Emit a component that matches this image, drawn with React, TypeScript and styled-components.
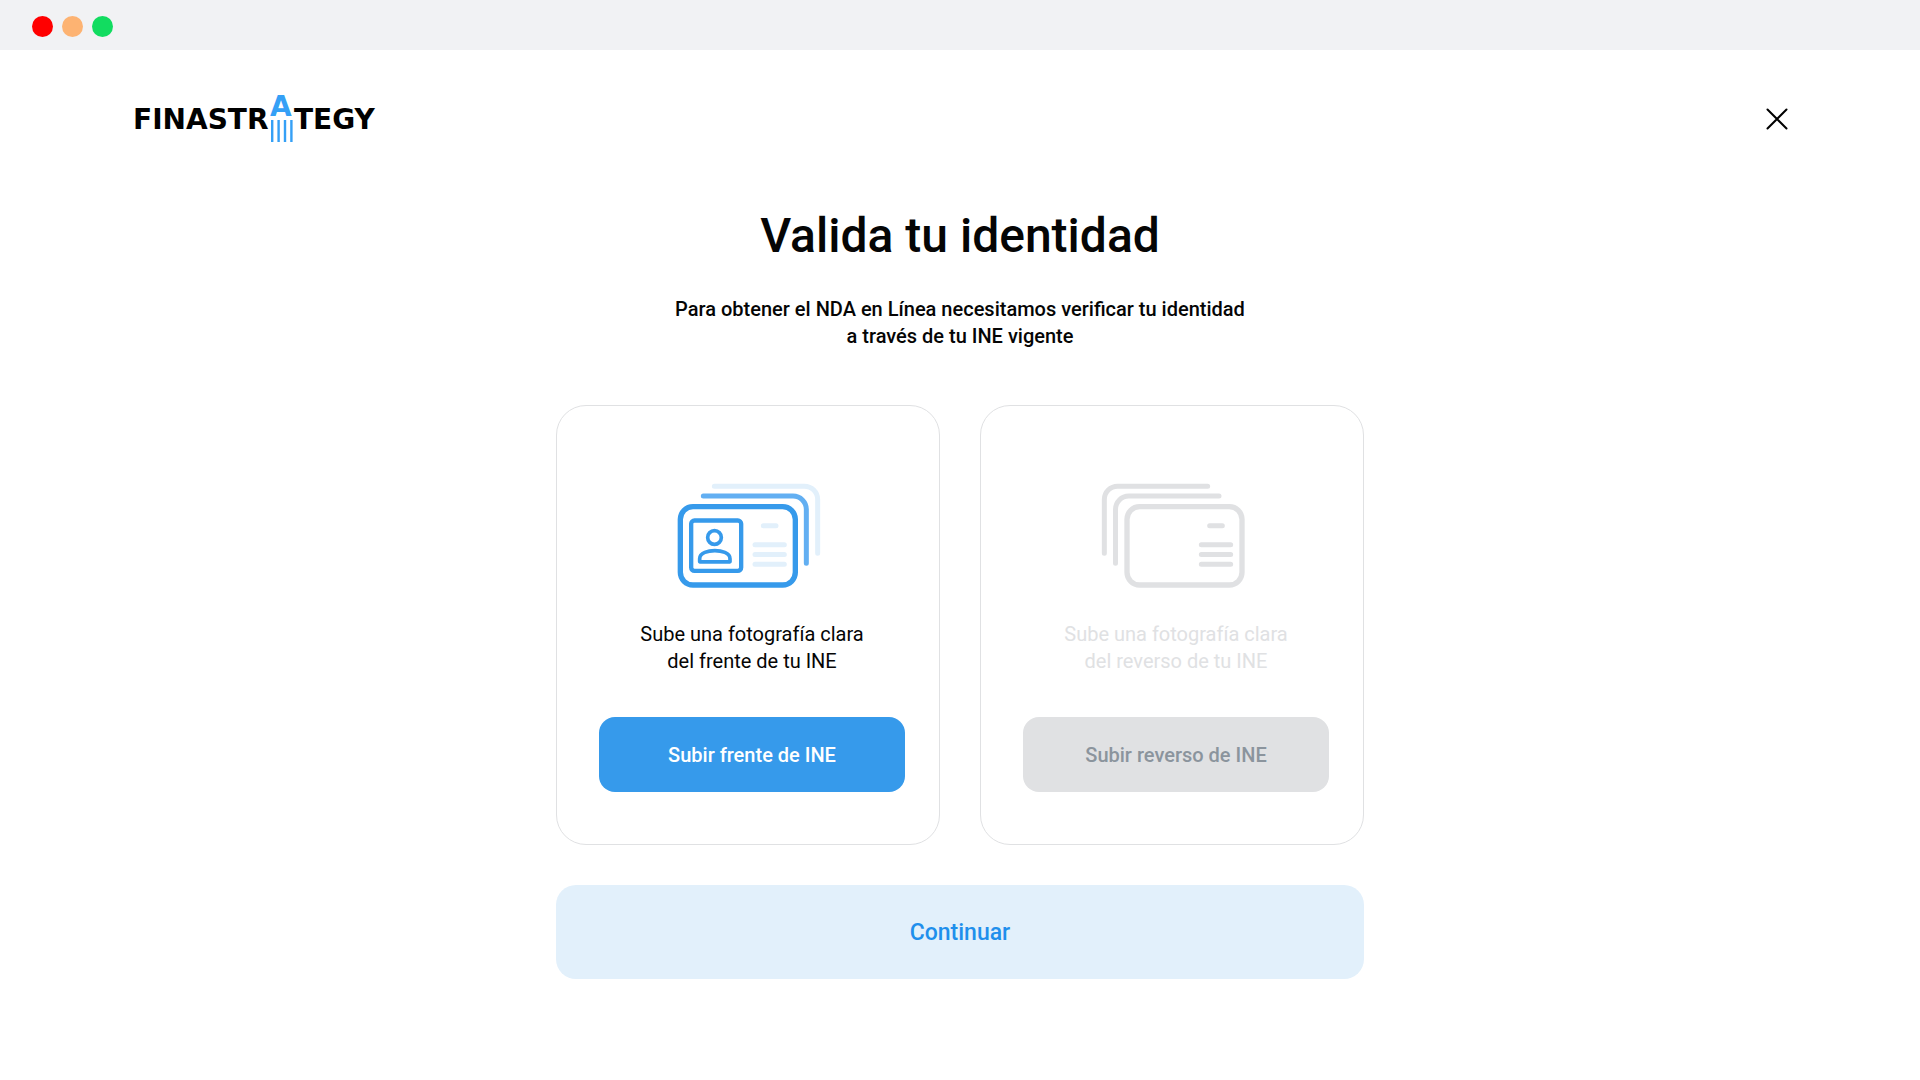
import React from "react";
import styled, { createGlobalStyle } from "styled-components";

const color = {
  ink: "#050505",
  blue: "#369aeb",
  blueText: "#1f8fec",
  blueMid: "#62aff2",
  bluePale: "#e2f0fb",
  grey: "#e0e1e3",
  greyText: "#8b949d",
  chrome: "#f1f2f4",
};

const GlobalStyle = createGlobalStyle`
  *, *::before, *::after { box-sizing: border-box; }
  body {
    margin: 0;
    background: #fff;
    color: ${color.ink};
    font-family: Roboto, "Liberation Sans", sans-serif;
  }
`;

const WindowBar = styled.div`
  display: flex;
  gap: 9px;
  padding: 16px 32px 13px;
  background: ${color.chrome};
`;

const Dot = styled.span<{ $fill: string }>`
  width: 21px;
  height: 21px;
  border-radius: 50%;
  background: ${(p) => p.$fill};
`;

const Header = styled.header`
  display: flex;
  align-items: center;
  justify-content: space-between;
  padding: 45px 132px 0 134px;
`;

const HomeLink = styled.a`
  display: block;
  color: #000;
  text-decoration: none;
`;

const LogoSvg = styled.svg`
  display: block;
  overflow: visible;
  font-family: "DejaVu Sans", sans-serif;
  font-size: 28px;
  font-weight: 700;
`;

const CloseButton = styled.button`
  display: flex;
  padding: 0;
  border: 0;
  background: none;
  color: #000;
  cursor: pointer;
`;

const Main = styled.main`
  display: flex;
  flex-direction: column;
  align-items: center;
  max-width: 808px;
  margin: 0 auto;
  padding: 62px 0 100px;
`;

const Title = styled.h1`
  margin: 0;
  font-size: 48px;
  font-weight: 500;
  line-height: 64px;
  text-align: center;
`;

const Text = styled.p<{ $tone?: string; $weight?: number }>`
  margin: 0;
  font-size: 20px;
  font-weight: ${(p) => p.$weight ?? 400};
  line-height: 27px;
  text-align: center;
  color: ${(p) => p.$tone ?? color.ink};
`;

const Intro = styled(Text)`
  margin-top: 28px;
`;

const Cards = styled.div`
  display: grid;
  grid-template-columns: 1fr 1fr;
  gap: 40px;
  width: 100%;
  margin-top: 55px;
`;

const Card = styled.section`
  display: flex;
  flex-direction: column;
  align-items: center;
  padding: 77px 34px 52px 42px;
  border: 1px solid ${color.grey};
  border-radius: 30px;
`;

const Illustration = styled.svg`
  display: block;
  margin-bottom: 33px;
  fill: none;
  stroke-linecap: round;
  stroke-linejoin: round;
`;

const Button = styled.button`
  width: 100%;
  border: 0;
  font-family: inherit;
  font-weight: 500;
  cursor: pointer;
  &:disabled { cursor: default; }
`;

const UploadButton = styled(Button)`
  height: 75px;
  margin-top: 42px;
  border-radius: 16px;
  font-size: 20px;
  background: ${color.blue};
  color: #fff;
  &:disabled {
    background: ${color.grey};
    color: ${color.greyText};
  }
`;

const ContinueButton = styled(Button)`
  height: 94px;
  margin-top: 40px;
  border-radius: 20px;
  font-size: 23px;
  background: ${color.bluePale};
  color: ${color.blueText};
`;

function Logo() {
  return (
    <LogoSvg width="245" height="47" viewBox="0 0 245 47" role="img" aria-label="Finastrategy">
      <text x="-1" y="34" fill="currentColor">FINASTR</text>
      <text x="136" y="21" fill="#35a0f6">A</text>
      <text x="160" y="34" fill="currentColor">TEGY</text>
      <g fill="#35a0f6">
        <rect x="137" y="25" width="2.4" height="22" />
        <rect x="143.4" y="25" width="2.4" height="22" />
        <rect x="149.8" y="25" width="2.4" height="22" />
        <rect x="156.2" y="25" width="2.4" height="22" />
      </g>
    </LogoSvg>
  );
}

function FrontIllustration() {
  return (
    <Illustration width="151" height="105" viewBox="48 39 453 315" aria-hidden="true">
      <path d="M160 48.5H430a40 40 0 0 1 40 40V250" stroke={color.bluePale} strokeWidth="15" />
      <path d="M127 78H396a40 40 0 0 1 40 40V280" stroke={color.blueMid} strokeWidth="15" />
      <g stroke={color.blue}>
        <rect x="58" y="110" width="345" height="235" rx="38" strokeWidth="16" />
        <rect x="90.5" y="151.5" width="150" height="151" rx="10" strokeWidth="13" />
        <circle cx="160.5" cy="202.5" r="20.5" strokeWidth="11" />
        <path d="M116 266C116 248 142 242 161.500 242S207 248 207 266V275.500H116Z" strokeWidth="11" />
      </g>
      <path d="M307 167H345M282 224.500H370M282 253.500H370M282 283H370" stroke={color.bluePale} strokeWidth="15" />
    </Illustration>
  );
}

function BackIllustration() {
  return (
    <Illustration width="151" height="105" viewBox="60 39 453 315" stroke={color.grey} aria-hidden="true">
      <path d="M380 48.500H110a40 40 0 0 0 -40 40V250" strokeWidth="15" />
      <path d="M414 78H143.500a40 40 0 0 0 -40 40V280" strokeWidth="15" />
      <rect x="138" y="110" width="345" height="235" rx="38" strokeWidth="16" />
      <path d="M386 167H424M361 224.500H449M361 253.500H449M361 283H449" strokeWidth="15" />
    </Illustration>
  );
}

export default function App() {
  return (
    <>
      <GlobalStyle />
      <WindowBar>
        <Dot $fill="#ff0000" />
        <Dot $fill="#fdb372" />
        <Dot $fill="#12dc60" />
      </WindowBar>
      <Header>
        <HomeLink href="#">
          <Logo />
        </HomeLink>
        <CloseButton type="button" aria-label="Cerrar">
          <svg width="22" height="22" viewBox="0 0 22 22" fill="none" stroke="currentColor" strokeWidth="2" strokeLinecap="round" aria-hidden="true">
            <path d="M1.500 1.500L20.500 20.500M20.500 1.500L1.500 20.500" />
          </svg>
        </CloseButton>
      </Header>
      <Main>
        <Title>Valida tu identidad</Title>
        <Intro $weight={500}>
          Para obtener el NDA en Línea necesitamos verificar tu identidad
          <br />a través de tu INE vigente
        </Intro>
        <Cards>
          <Card>
            <FrontIllustration />
            <Text>
              Sube una fotografía clara
              <br />
              del frente de tu INE
            </Text>
            <UploadButton type="button">Subir frente de INE</UploadButton>
          </Card>
          <Card>
            <BackIllustration />
            <Text $tone={color.grey}>
              Sube una fotografía clara
              <br />
              del reverso de tu INE
            </Text>
            <UploadButton type="button" disabled>
              Subir reverso de INE
            </UploadButton>
          </Card>
        </Cards>
        <ContinueButton type="button">Continuar</ContinueButton>
      </Main>
    </>
  );
}
